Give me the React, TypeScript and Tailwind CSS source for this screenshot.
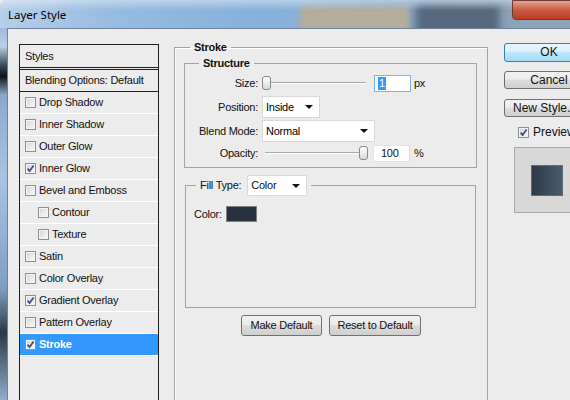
import type { ReactNode } from 'react'

function Check({ checked }: { checked?: boolean }) {
  return (
    <span className="w-[11px] h-[11px] shrink-0 border border-[#8e8f8f] bg-gradient-to-br from-[#d2d4d8] to-[#fbfbfb] flex items-center justify-center shadow-[inset_0_0_0_1px_#f4f4f4]">
      {checked && (
        <svg width="9" height="9" viewBox="0 0 9 9">
          <path d="M1.6 4.6 L3.6 7 L7.6 1.4" fill="none" stroke="#3d4f82" strokeWidth="1.7" />
        </svg>
      )}
    </span>
  )
}

function StyleRow({ label, checked, nested, selected }: { label: string; checked?: boolean; nested?: boolean; selected?: boolean }) {
  return (
    <div
      className={`h-[22px] flex items-center gap-[3px] border-b border-white ${nested ? 'pl-[18px]' : 'pl-[5px]'} ${selected ? 'bg-[#3399ff] text-white font-bold border-[#3399ff]' : 'text-[#111]'}`}
    >
      <Check checked={checked} />
      <span>{label}</span>
    </div>
  )
}

function Arrow() {
  return (
    <svg width="8" height="4" viewBox="0 0 8 4">
      <path d="M0 0 H8 L4 4 Z" fill="#111" />
    </svg>
  )
}

function Select({ value, width }: { value: string; width: string }) {
  return (
    <div className={`${width} h-[22px] bg-white border border-[#d9d9d9] flex items-center justify-between pl-[3px] pr-[6px]`}>
      <span>{value}</span>
      <Arrow />
    </div>
  )
}

function Slider({ at }: { at: 'start' | 'end' }) {
  return (
    <div className="relative w-[106px] h-[16px]">
      <div className="absolute left-[3px] right-[2px] top-[7px] h-[2px] border-t border-[#a9a9a9] border-b border-b-white" />
      <div
        className={`absolute top-[1px] w-[9px] h-[14px] rounded-[3px] border border-[#8a8a8a] bg-gradient-to-b from-white to-[#d8d8d8] ${at === 'start' ? 'left-0' : 'right-0'}`}
      />
    </div>
  )
}

function Row({ label, children, className = '' }: { label: string; children: ReactNode; className?: string }) {
  return (
    <div className={`flex items-center ${className}`}>
      <div className="w-[73px] text-right text-[#111]">{label}</div>
      <div className="ml-[4px] flex items-center">{children}</div>
    </div>
  )
}

function WinButton({ children, primary, className = '' }: { children: ReactNode; primary?: boolean; className?: string }) {
  return (
    <div
      className={`rounded-[3px] border flex items-center justify-center text-[#111] ${
        primary
          ? 'border-[#3c7fb1] bg-[linear-gradient(#eaf6fd_0%,#d9f0fc_45%,#bee6fd_50%,#a7d9f5_100%)]'
          : 'border-[#707070] bg-[linear-gradient(#f2f2f2_0%,#ebebeb_45%,#dddddd_50%,#cfcfcf_100%)]'
      } ${className}`}
    >
      {children}
    </div>
  )
}

export default function App() {
  const styles = [
    { label: 'Drop Shadow' },
    { label: 'Inner Shadow' },
    { label: 'Outer Glow' },
    { label: 'Inner Glow', checked: true },
    { label: 'Bevel and Emboss' },
    { label: 'Contour', nested: true },
    { label: 'Texture', nested: true },
    { label: 'Satin' },
    { label: 'Color Overlay' },
    { label: 'Gradient Overlay', checked: true },
    { label: 'Pattern Overlay' },
    { label: 'Stroke', checked: true, selected: true },
  ]

  return (
    <div className="w-[570px] h-[400px] overflow-hidden flex flex-col bg-[#ececec] font-['Liberation_Sans',Arial,sans-serif] text-[11px] leading-[13px] tracking-[-0.25px]">
      {/* aero title bar */}
      <div className="relative h-[28px] shrink-0 overflow-hidden rounded-tl-[6px] bg-[linear-gradient(90deg,#b7cfe8_0%,#98bbe0_20%,#88b0da_45%,#8ab0d8_52%,#7fa3c8_70%,#8aa6c2_100%)]">
        <div className="absolute left-[300px] top-[6px] w-[110px] h-[40px] bg-[#b3ad9b] blur-[3px]" />
        <div className="absolute left-[416px] top-[4px] w-[90px] h-[40px] bg-[#56697e] blur-[4px]" />
        <div className="absolute left-[500px] top-[4px] w-[80px] h-[40px] bg-[#8ba2b8] blur-[4px]" />
        <div className="absolute inset-x-0 top-0 h-[10px] bg-gradient-to-b from-white/40 to-transparent" />
        <div className="absolute left-[512px] top-0 w-[70px] h-[20px] rounded-bl-[4px] border border-[#6d3a33] bg-gradient-to-b from-[#e8a493] via-[#c75a40] to-[#c03a20]" />
        <div className="relative pl-[8px] pt-[8px] text-[11.5px] tracking-normal leading-[14px] text-black font-['Noto_Sans',sans-serif]">Layer Style</div>
      </div>

      <div className="flex flex-1 min-h-0">
        {/* glass frame strip */}
        <div className="w-[7px] shrink-0 bg-[linear-gradient(#9fbcdc_0%,#b9cfe6_5%,#3a4a5a_10%,#0f141a_13%,#8aa9c8_18%,#a8c4e2_40%,#7f9fbf_70%,#2a3848_82%,#93aecb_100%)]" />

        <div className="flex-1 flex border-l border-t border-[#6e8298] bg-[#ececec]">
          {/* styles list */}
          <div className="ml-[11px] mt-[15px] w-[140px] h-[400px] shrink-0 border border-[#1f1f1f]">
            <div className="h-[22px] flex items-center pl-[5px] text-[#111]">Styles</div>
            <div className="h-[3px] border-y border-[#1f1f1f]" />
            <div className="h-[22px] flex items-center pl-[5px] text-[#111] border-b border-[#1f1f1f]">Blending Options: Default</div>
            {styles.map((s) => (
              <StyleRow key={s.label} {...s} />
            ))}
          </div>

          {/* stroke panel */}
          <fieldset className="ml-[15px] mt-[12px] w-[314px] h-[420px] shrink-0 border border-[#a3a3a3] shadow-[inset_1px_1px_0_#fff]">
            <legend className="ml-[15px] px-[4px] font-bold text-[#111]">Stroke</legend>

            <fieldset className="ml-[9px] mt-[3px] w-[293px] border border-[#a3a3a3] pb-[4px] pt-[2px]">
              <legend className="ml-[14px] px-[4px] font-bold text-[#111]">Structure</legend>

              <Row label="Size:" className="h-[22px]">
                <Slider at="start" />
                <div className="ml-[6px] w-[37px] h-[17px] bg-white border border-[#7eb4ea] flex items-center pl-[3px]">
                  <span className="bg-[#3399ff] text-white px-[1px]">1</span>
                </div>
                <span className="ml-[3px] text-[#111]">px</span>
              </Row>
              <Row label="Position:" className="h-[22px] mt-[2px]">
                <Select value="Inside" width="w-[58px]" />
              </Row>
              <Row label="Blend Mode:" className="h-[22px] mt-[2px]">
                <Select value="Normal" width="w-[113px]" />
              </Row>
              <Row label="Opacity:" className="h-[20px] mt-[1px]">
                <Slider at="end" />
                <div className="ml-[5px] w-[37px] h-[17px] bg-white border border-[#e2e2e2] flex items-center pl-[7px] text-[#111]">100</div>
                <span className="ml-[4px] text-[#111]">%</span>
              </Row>
            </fieldset>

            <fieldset className="ml-[10px] mt-[7px] w-[291px] h-[133px] border border-[#a3a3a3]">
              <legend className="ml-[10px] px-[4px] flex items-center gap-[6px] text-[#111]">
                <span>Fill Type:</span>
                <div className="w-[60px] h-[21px] bg-white border border-[#d9d9d9] flex items-center justify-between pl-[3px] pr-[6px]">
                  <span>Color</span>
                  <Arrow />
                </div>
              </legend>
              <div className="pt-[10px] pl-[8px] flex items-center gap-[4px] text-[#111]">
                <span>Color:</span>
                <span className="w-[31px] h-[16px] bg-[#27323e] border border-[#808080]" />
              </div>
            </fieldset>

            <div className="mt-[7px] flex justify-center gap-[7px]">
              <WinButton className="w-[81px] h-[21px]">Make Default</WinButton>
              <WinButton className="w-[92px] h-[21px]">Reset to Default</WinButton>
            </div>
          </fieldset>

          {/* right column */}
          <div className="ml-[16px] mt-[14px] w-[90px] shrink-0 flex flex-col tracking-normal">
            <WinButton primary className="h-[19px] text-[12px]">OK</WinButton>
            <WinButton className="mt-[9px] h-[18px] text-[12px]">Cancel</WinButton>
            <WinButton className="mt-[10px] h-[18px] text-[12px] justify-start pl-[8px]">New Style...</WinButton>
            <div className="mt-[9px] ml-[14px] flex items-center gap-[4px] text-[12px] text-[#111]">
              <Check checked />
              <span>Preview</span>
            </div>
            <div className="mt-[8px] ml-[10px] h-[66px] bg-[#d8d8d8] border border-[#a8a8a8] pt-[17px] pl-[16px]">
              <div className="w-[32px] h-[31px] border border-[#5a6b7c] bg-gradient-to-r from-[#2c3a48] to-[#4a5b6c]" />
            </div>
          </div>
        </div>
      </div>
    </div>
  )
}
